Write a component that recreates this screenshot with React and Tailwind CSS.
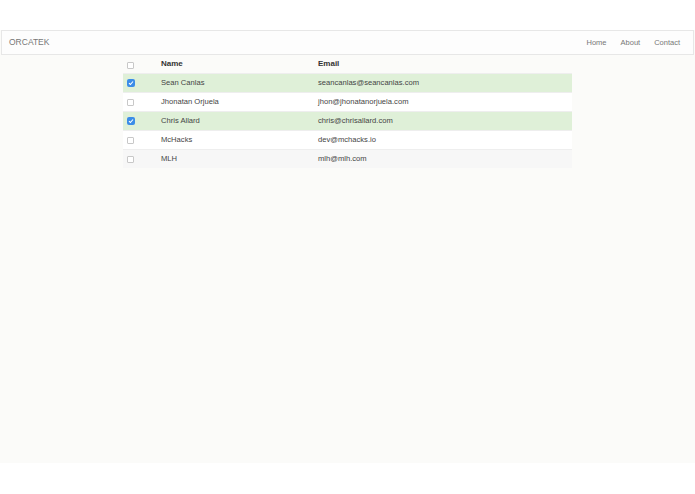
const rows = [
  { name: "Sean Canlas", email: "seancanlas@seancanlas.com", checked: true },
  { name: "Jhonatan Orjuela", email: "jhon@jhonatanorjuela.com", checked: false },
  { name: "Chris Allard", email: "chris@chrisallard.com", checked: true },
  { name: "McHacks", email: "dev@mchacks.io", checked: false },
  { name: "MLH", email: "mlh@mlh.com", checked: false, hover: true },
]

function Box({ checked }) {
  if (checked) {
    return (
      <span className="flex h-[8px] w-[8px] items-center justify-center rounded-[2px] bg-[#3b8de8]">
        <svg width="6" height="6" viewBox="0 0 6 6">
          <path d="M1 3.2 L2.4 4.5 L5 1.5" fill="none" stroke="white" strokeWidth="1.1" />
        </svg>
      </span>
    )
  }
  return <span className="block h-[7px] w-[7px] rounded-[1px] border border-[#c8c8c8] bg-white" />
}

export default function App() {
  return (
    <div className="h-[494px] bg-white font-['Liberation_Sans',Arial,sans-serif] text-[#333]">
      <div className="h-[30px]" />
      <div className="h-[433px] bg-[#fbfbf9]">
        <nav className="mx-[1px] flex h-[25px] items-center justify-between border border-[#e7e7e7] bg-[#fdfdfd] pl-[7px] pr-[13px]">
          <span className="text-[8.5px] text-[#777]">ORCATEK</span>
          <div className="flex gap-[14px] text-[7.5px] text-[#777]">
            <span>Home</span>
            <span>About</span>
            <span>Contact</span>
          </div>
        </nav>
        <div className="ml-[123px] w-[449px]">
          <div className="flex h-[18px] items-center text-[8px] font-bold text-[#333]">
            <div className="w-[38px] pl-[4px] pt-[2px]"><Box checked={false} /></div>
            <div className="w-[157px]">Name</div>
            <div>Email</div>
          </div>
          {rows.map((r) => (
            <div
              key={r.name}
              className={
                "flex h-[19px] items-center border-t border-[#eeeeee] text-[7.6px] text-[#444] " +
                (r.checked ? "bg-[#dff0d8]" : r.hover ? "bg-[#f7f7f7]" : "bg-white")
              }
            >
              <div className="w-[38px] pl-[4px]"><Box checked={r.checked} /></div>
              <div className="w-[157px]">{r.name}</div>
              <div>{r.email}</div>
            </div>
          ))}
        </div>
      </div>
    </div>
  )
}
